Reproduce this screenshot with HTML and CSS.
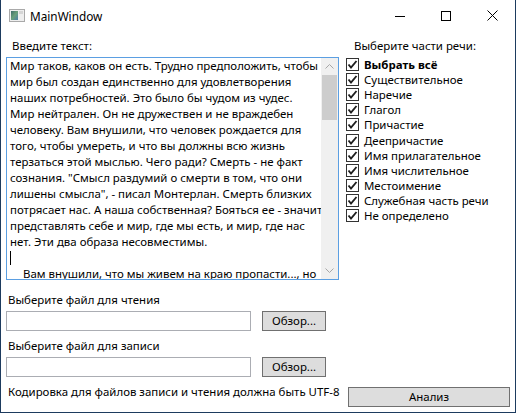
FILE: index.html
```html
<!DOCTYPE html>
<html lang="ru">
<head>
<meta charset="utf-8">
<title>MainWindow</title>
<link rel="stylesheet" href="styles.css">
</head>
<body>
<div class="window">
  <div class="titlebar">
    <svg class="app-icon" width="16" height="13" viewBox="0 0 16 13">
      <defs>
        <linearGradient id="g1" x1="0" y1="0" x2="1" y2="1">
          <stop offset="0" stop-color="#3d6b6a"/>
          <stop offset="0.5" stop-color="#6aa07a"/>
          <stop offset="1" stop-color="#4b7fa8"/>
        </linearGradient>
      </defs>
      <rect x="0.5" y="0.5" width="15" height="12" fill="#eeeeee" stroke="#a9a9a9"/>
      <rect x="2" y="2" width="7" height="9" fill="url(#g1)"/>
      <rect x="10" y="2" width="4" height="3" fill="#d5d5d5"/>
    </svg>
    <span class="title">MainWindow</span>
    <div class="caption-buttons">
      <span class="cap-btn"><svg width="10" height="10" viewBox="0 0 10 10"><path d="M0 5.5H10" stroke="#000" stroke-width="1"/></svg></span>
      <span class="cap-btn"><svg width="10" height="10" viewBox="0 0 10 10"><rect x="0.5" y="0.5" width="9" height="9" fill="none" stroke="#000" stroke-width="1"/></svg></span>
      <span class="cap-btn"><svg width="11" height="11" viewBox="0 0 11 11"><path d="M0.5 0.5L10.5 10.5M10.5 0.5L0.5 10.5" stroke="#000" stroke-width="1"/></svg></span>
    </div>
  </div>
  <div class="client">
    <div class="left-top">
      <div class="label">Введите текст:</div>
      <div class="textbox">
        <div class="text-content">
          <div class="line">Мир таков, каков он есть. Трудно предположить, чтобы</div>
          <div class="line">мир был создан единственно для удовлетворения</div>
          <div class="line">наших потребностей. Это было бы чудом из чудес.</div>
          <div class="line">Мир нейтрален. Он не дружествен и не враждебен</div>
          <div class="line">человеку. Вам внушили, что человек рождается для</div>
          <div class="line">того, чтобы умереть, и что вы должны всю жизнь</div>
          <div class="line">терзаться этой мыслью. Чего ради? Смерть - не факт</div>
          <div class="line">сознания. "Смысл раздумий о смерти в том, что они</div>
          <div class="line">лишены смысла", - писал Монтерлан. Смерть близких</div>
          <div class="line">потрясает нас. А наша собственная? Бояться ее - значит</div>
          <div class="line">представлять себе и мир, где мы есть, и мир, где нас</div>
          <div class="line">нет. Эти два образа несовместимы.</div>
          <div class="line"><span class="caret"></span></div>
          <div class="line indent">Вам внушили, что мы живем на краю пропасти..., но</div>
        </div>
        <div class="scrollbar">
          <div class="sb-arrow"><svg width="9" height="5" viewBox="0 0 9 5"><path d="M0.5 4.5L4.5 0.5L8.5 4.5" fill="none" stroke="#a6a6a6" stroke-width="1"/></svg></div>
          <div class="sb-track"><div class="sb-thumb"></div></div>
          <div class="sb-arrow"><svg width="9" height="5" viewBox="0 0 9 5"><path d="M0.5 0.5L4.5 4.5L8.5 0.5" fill="none" stroke="#a6a6a6" stroke-width="1"/></svg></div>
        </div>
      </div>
    </div>
    <div class="right-top">
      <div class="label label-right">Выберите части речи:</div>
      <ul class="checklist">
        <li class="check-item bold"><span class="box"><svg width="11" height="11" viewBox="0 0 11 11"><path d="M1.5 5.5L4 8.5L9.5 2" fill="none" stroke="#1e1e1e" stroke-width="1.9"/></svg></span>Выбрать всё</li>
        <li class="check-item"><span class="box"><svg width="11" height="11" viewBox="0 0 11 11"><path d="M1.5 5.5L4 8.5L9.5 2" fill="none" stroke="#1e1e1e" stroke-width="1.9"/></svg></span>Существительное</li>
        <li class="check-item"><span class="box"><svg width="11" height="11" viewBox="0 0 11 11"><path d="M1.5 5.5L4 8.5L9.5 2" fill="none" stroke="#1e1e1e" stroke-width="1.9"/></svg></span>Наречие</li>
        <li class="check-item"><span class="box"><svg width="11" height="11" viewBox="0 0 11 11"><path d="M1.5 5.5L4 8.5L9.5 2" fill="none" stroke="#1e1e1e" stroke-width="1.9"/></svg></span>Глагол</li>
        <li class="check-item"><span class="box"><svg width="11" height="11" viewBox="0 0 11 11"><path d="M1.5 5.5L4 8.5L9.5 2" fill="none" stroke="#1e1e1e" stroke-width="1.9"/></svg></span>Причастие</li>
        <li class="check-item"><span class="box"><svg width="11" height="11" viewBox="0 0 11 11"><path d="M1.5 5.5L4 8.5L9.5 2" fill="none" stroke="#1e1e1e" stroke-width="1.9"/></svg></span>Деепричастие</li>
        <li class="check-item"><span class="box"><svg width="11" height="11" viewBox="0 0 11 11"><path d="M1.5 5.5L4 8.5L9.5 2" fill="none" stroke="#1e1e1e" stroke-width="1.9"/></svg></span>Имя прилагательное</li>
        <li class="check-item"><span class="box"><svg width="11" height="11" viewBox="0 0 11 11"><path d="M1.5 5.5L4 8.5L9.5 2" fill="none" stroke="#1e1e1e" stroke-width="1.9"/></svg></span>Имя числительное</li>
        <li class="check-item"><span class="box"><svg width="11" height="11" viewBox="0 0 11 11"><path d="M1.5 5.5L4 8.5L9.5 2" fill="none" stroke="#1e1e1e" stroke-width="1.9"/></svg></span>Местоимение</li>
        <li class="check-item"><span class="box"><svg width="11" height="11" viewBox="0 0 11 11"><path d="M1.5 5.5L4 8.5L9.5 2" fill="none" stroke="#1e1e1e" stroke-width="1.9"/></svg></span>Служебная часть речи</li>
        <li class="check-item"><span class="box"><svg width="11" height="11" viewBox="0 0 11 11"><path d="M1.5 5.5L4 8.5L9.5 2" fill="none" stroke="#1e1e1e" stroke-width="1.9"/></svg></span>Не определено</li>
      </ul>
    </div>
    <div class="left-bottom">
      <div class="label file-label first">Выберите файл для чтения</div>
      <div class="file-row">
        <div class="input"></div>
        <div class="btn browse">Обзор...</div>
      </div>
      <div class="label file-label second">Выберите файл для записи</div>
      <div class="file-row">
        <div class="input"></div>
        <div class="btn browse">Обзор...</div>
      </div>
      <div class="label note">Кодировка для файлов записи и чтения должна быть UTF-8</div>
    </div>
    <div class="right-bottom">
      <div class="btn analyze">Анализ</div>
    </div>
  </div>
</div>
</body>
</html>
```
FILE: styles.css
```css
* { box-sizing: border-box; }
html, body {
  margin: 0;
  padding: 0;
  background: #ffffff;
}
body {
  font-family: "Noto Sans", "Open Sans", sans-serif;
  font-size: 11.45px;
  color: #000;
}
.window {
  width: 516px;
  height: 413px;
  border: 1px solid #1d3b5e;
  border-top: none;
  background: #fff;
  display: flex;
  flex-direction: column;
  overflow: hidden;
}
.titlebar {
  height: 31px;
  display: flex;
  align-items: center;
  flex: none;
}
.app-icon {
  margin-left: 8px;
  margin-top: -1px;
  flex: none;
}
.title {
  margin-left: 5px;
  font-size: 11.8px;
  line-height: 16px;
  margin-top: 1px;
}
.caption-buttons {
  margin-left: auto;
  display: flex;
  height: 100%;
}
.cap-btn {
  width: 46px;
  height: 31px;
  display: flex;
  align-items: center;
  justify-content: center;
}
.client {
  flex: 1;
  display: grid;
  grid-template-columns: 333px 1fr;
  grid-template-rows: auto 1fr;
  column-gap: 7px;
  padding-left: 5px;
  padding-right: 5px;
}
.label {
  line-height: 16px;
  white-space: nowrap;
}
.left-top {
  padding-top: 7px;
}
.left-top .label {
  padding-left: 6px;
}
.textbox {
  margin-top: 3px;
  height: 223px;
  border: 1px solid #5b9fe2;
  display: flex;
  overflow: hidden;
}
.text-content {
  flex: 1;
  overflow: hidden;
  padding-left: 3px;
  line-height: 16px;
  white-space: nowrap;
}
.line {
  height: 16px;
}
.line.indent {
  padding-left: 13px;
}
.caret {
  display: inline-block;
  width: 1px;
  height: 14px;
  background: #000;
  vertical-align: top;
  margin-top: 1px;
}
.scrollbar {
  width: 17px;
  flex: none;
  background: #f0f0f0;
  display: flex;
  flex-direction: column;
}
.sb-arrow {
  height: 17px;
  display: flex;
  align-items: center;
  justify-content: center;
  flex: none;
}
.sb-track {
  flex: 1;
}
.sb-thumb {
  height: 45px;
  margin: 0 1px;
  background: #cdcdcd;
}
.right-top {
  padding-top: 7px;
}
.label-right {
  padding-left: 8px;
}
.checklist {
  list-style: none;
  margin: 3px 0 0;
  padding: 0;
}
.check-item {
  height: 15.1px;
  display: flex;
  align-items: center;
  white-space: nowrap;
  line-height: 15px;
}
.check-item.bold {
  font-weight: bold;
}
.box {
  width: 13px;
  height: 13px;
  border: 1px solid #333333;
  background: #fff;
  display: flex;
  align-items: center;
  justify-content: center;
  margin-right: 5px;
  flex: none;
}
.left-bottom {
  display: flex;
  flex-direction: column;
}
.file-label {
  padding-left: 2px;
}
.file-label.first {
  margin-top: 12px;
}
.file-label.second {
  margin-top: 7px;
}
.file-row {
  display: flex;
  margin-top: 3px;
  height: 20px;
}
.input {
  width: 245px;
  height: 20px;
  border: 1px solid #abadb3;
  background: #fff;
}
.btn {
  background: #dddddd;
  border: 1px solid #707070;
  display: flex;
  align-items: center;
  justify-content: center;
  line-height: 16px;
}
.browse {
  margin-left: 11px;
  width: 64px;
  height: 20px;
}
.note {
  margin-top: 7px;
  padding-left: 2px;
}
.right-bottom {
  display: flex;
  align-items: flex-end;
}
.analyze {
  margin-left: 2px;
  margin-bottom: 5px;
  width: 162px;
  height: 20px;
}
```
